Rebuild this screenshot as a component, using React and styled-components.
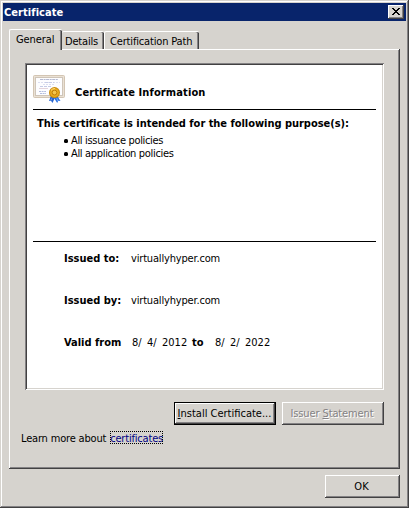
import React from 'react';
import styled, { createGlobalStyle } from 'styled-components';

const face = '#d6d3ce';
const light = '#ffffff';
const shade = '#848284';
const dark = '#424142';

const GlobalStyle = createGlobalStyle`
  *, *::before, *::after { box-sizing: border-box; }
  body {
    margin: 0;
    background: #fff;
    color: #000;
    font: 11px/13px "DejaVu Sans Condensed", "DejaVu Sans", Tahoma, sans-serif;
    white-space: nowrap;
  }
`;

const Window = styled.div`
  width: 409px;
  height: 508px;
  padding: 3px;
  display: flex;
  flex-direction: column;
  background: ${face};
  box-shadow: inset -1px -1px ${dark}, inset 1px 1px ${face},
    inset -2px -2px ${shade}, inset 2px 2px ${light};
`;

const TitleBar = styled.header`
  height: 18px;
  flex: none;
  padding: 0 2px 0 1px;
  display: flex;
  align-items: center;
  justify-content: space-between;
  background: #08246b;
  color: #fff;
  font-weight: bold;
`;

const Text = styled.span`
  letter-spacing: ${(p) => p.$track || 0}px;
`;

const CloseButton = styled.button`
  width: 16px;
  height: 14px;
  padding: 0 1px 1px 0;
  border: 0;
  display: flex;
  align-items: center;
  justify-content: center;
  background: ${face};
  box-shadow: inset -1px -1px ${dark}, inset 1px 1px ${light},
    inset -2px -2px ${shade};
`;

const Body = styled.main`
  flex: 1;
  display: flex;
  flex-direction: column;
  padding: 8px 6px 0;
`;

const TabStrip = styled.nav`
  height: 20px;
  display: flex;
  align-items: flex-end;
`;

const Tab = styled.div`
  width: ${(p) => p.$width}px;
  height: ${(p) => (p.$active ? 21 : 18)}px;
  margin-bottom: ${(p) => (p.$active ? -1 : 0)}px;
  padding: 3px 0 0 ${(p) => p.$inset}px;
  border: solid ${light};
  border-width: 1px 0 0 ${(p) => (p.$joined ? 0 : 1)}px;
  border-radius: 2px 2px 0 0;
  background: ${face};
  box-shadow: inset -1px 0 ${dark}, inset -2px 0 ${shade};
  z-index: ${(p) => (p.$active ? 1 : 0)};
`;

const Panel = styled.section`
  height: 420px;
  padding: 14px 16px 0;
  box-shadow: inset -1px -1px ${dark}, inset 1px 1px ${light},
    inset -2px -2px ${shade};
`;

const Sheet = styled.article`
  width: 359px;
  height: 327px;
  padding: 12px 8px 2px;
  background: #fff;
  box-shadow: inset 1px 1px ${shade}, inset -1px -1px ${light},
    inset 2px 2px ${dark}, inset -2px -2px ${face};
`;

const SheetHeader = styled.div`
  height: 34px;
  display: flex;
  gap: 9px;
  font-weight: bold;
`;

const SheetTitle = styled.h1`
  margin: 11px 0 0;
  font: inherit;
  letter-spacing: 0.12px;
`;

const Rule = styled.hr`
  width: 343px;
  height: 1px;
  margin: 0;
  border: 0;
  background: #000;
`;

const Purposes = styled.div`
  height: 131px;
  padding: 7px 0 0 4px;
`;

const PurposeTitle = styled.h2`
  margin: 0 0 4px;
  font: inherit;
  font-weight: bold;
  letter-spacing: -0.03px;
`;

const PurposeList = styled.ul`
  margin: 0;
  padding: 0 0 0 27px;
  list-style: none;
`;

const Purpose = styled.li`
  display: flex;
  align-items: center;
  gap: 3px;
  letter-spacing: -0.33px;

  &::before {
    content: '';
    width: 4px;
    height: 4px;
    margin-top: 1px;
    border-radius: 1.5px;
    background: #000;
  }
`;

const Details = styled.dl`
  margin: 10px 0 0 31px;
  display: flex;
  flex-direction: column;
  gap: 29px;
`;

const Field = styled.div`
  display: flex;
`;

const FieldName = styled.dt`
  width: 67px;
  font-weight: bold;
`;

const FieldValue = styled.dd`
  margin: 0;
  display: flex;
  letter-spacing: ${(p) => p.$track || 0}px;
`;

const DateParts = styled.span`
  display: grid;
  grid-template-columns: 15px 15px 30px;
  padding-left: 1px;
`;

const DateTo = styled.b`
  width: 22px;
`;

const Actions = styled.div`
  display: flex;
  justify-content: flex-end;
  gap: 6px;
  margin-top: 12px;
`;

const Button = styled.button`
  width: ${(p) => p.$width || 102}px;
  height: 23px;
  padding: 0 ${(p) => (p.$default ? 1 : 2)}px 1px 0;
  border: 0;
  background: ${face};
  color: ${(p) => (p.disabled ? shade : '#000')};
  font: inherit;
  letter-spacing: ${(p) => p.$track || 0}px;
  text-shadow: ${(p) => (p.disabled ? `1px 1px ${light}` : 'none')};
  box-shadow: ${(p) =>
    p.$default
      ? `inset 0 0 0 1px #000, inset -2px -2px ${dark}, inset 2px 2px ${light}, inset -3px -3px ${shade}`
      : `inset -1px -1px ${dark}, inset 1px 1px ${light}, inset -2px -2px ${shade}`};
`;

const Key = styled.u`
  text-decoration-thickness: 1px;
  text-underline-offset: 1px;
`;

const LearnMore = styled.p`
  margin: 6px 0 0 -4px;
  display: flex;
  align-items: flex-start;
  gap: 4px;
  line-height: 15px;
  letter-spacing: -0.18px;
`;

const Link = styled.a`
  width: 53px;
  height: 13px;
  outline: 1px dotted #000;
  outline-offset: -1px;
  color: #000084;
  letter-spacing: -0.19px;
`;

const Footer = styled.footer`
  display: flex;
  justify-content: flex-end;
  padding-top: 6px;
`;

const CloseGlyph = () => (
  <svg width="8" height="7" viewBox="0 0 8 7" shapeRendering="crispEdges">
    <path
      d="M0 0h2v1h-2zM6 0h2v1h-2zM1 1h2v1h-2zM5 1h2v1h-2zM2 2h4v1h-4zM3 3h2v1h-2zM2 4h4v1h-4zM1 5h2v1h-2zM5 5h2v1h-2zM0 6h2v1h-2zM6 6h2v1h-2z"
      fill="#000"
    />
  </svg>
);

const CertificateIcon = () => (
  <svg width="33" height="29" viewBox="0 0 33 29">
    <rect x="0.5" y="0.5" width="31" height="22" rx="1" fill="#e4dacb" stroke="#d3c5b3" />
    <rect x="1.5" y="1.5" width="29" height="20" fill="none" stroke="#f1e9dc" strokeDasharray="1 1" />
    <rect x="2.5" y="2.5" width="27" height="18" fill="#fdfdff" stroke="#cfc5b9" />
    <path d="M7 4.5h18" stroke="#b4b9d0" strokeDasharray="3 .6 2 .5" />
    <path d="M5 7.5h22M10 9.5h12" stroke="#dcdff0" strokeDasharray="2 1" />
    <path d="M12 7.5h9M7 11.5h12" stroke="#c5cbe6" strokeDasharray="3 1" />
    <path d="M6 13.5h9" stroke="#e2d3dc" />
    <path d="M6 16.5h7M7 18.5h6" stroke="#b3bddd" strokeDasharray="2 .6" />
    <path d="M18 20.5l-2 5.5 2-.3 1.5 2.3L21.8 23z" fill="#2864cf" />
    <path d="M24 20.5l3.5 5.5-2.3-.2-1 2.2-3.2-5z" fill="#2e72e2" />
    <path d="M18.7 23.5l-.8 2M23.8 23l1 3" stroke="#72a9f5" />
    <circle cx="21.5" cy="17.6" r="5.5" fill="#c98a0c" />
    <circle cx="21.5" cy="17.6" r="4.4" fill="#e9ab20" />
    <circle cx="21.5" cy="17.6" r="2.4" fill="#f4c64c" stroke="#b97608" strokeWidth=".9" />
    <path d="M18 15.4q1.5-2 4-1.8" fill="none" stroke="#ffe080" />
  </svg>
);

const ValidDate = ({ month, day, year }) => (
  <DateParts>
    <span>{month}/</span>
    <span>{day}/</span>
    <span>{year}</span>
  </DateParts>
);

export default function App() {
  return (
    <>
      <GlobalStyle />
      <Window>
        <TitleBar>
          <Text $track={0.06}>Certificate</Text>
          <CloseButton aria-label="Close">
            <CloseGlyph />
          </CloseButton>
        </TitleBar>
        <Body>
          <TabStrip>
            <Tab $active $width={53} $inset={6}>
              <Text $track={-0.1}>General</Text>
            </Tab>
            <Tab $joined $width={42} $inset={3}>
              <Text $track={-0.19}>Details</Text>
            </Tab>
            <Tab $width={95} $inset={5}>
              <Text $track={-0.16}>Certification Path</Text>
            </Tab>
          </TabStrip>
          <Panel>
            <Sheet>
              <SheetHeader>
                <CertificateIcon />
                <SheetTitle>Certificate Information</SheetTitle>
              </SheetHeader>
              <Rule />
              <Purposes>
                <PurposeTitle>This certificate is intended for the following purpose(s):</PurposeTitle>
                <PurposeList>
                  <Purpose>All issuance policies</Purpose>
                  <Purpose>All application policies</Purpose>
                </PurposeList>
              </Purposes>
              <Rule />
              <Details>
                <Field>
                  <FieldName>Issued to:</FieldName>
                  <FieldValue $track={-0.17}>virtuallyhyper.com</FieldValue>
                </Field>
                <Field>
                  <FieldName>Issued by:</FieldName>
                  <FieldValue $track={-0.17}>virtuallyhyper.com</FieldValue>
                </Field>
                <Field>
                  <FieldName>Valid from</FieldName>
                  <FieldValue>
                    <ValidDate month="8" day="4" year="2012" />
                    <DateTo>to</DateTo>
                    <ValidDate month="8" day="2" year="2022" />
                  </FieldValue>
                </Field>
              </Details>
            </Sheet>
            <Actions>
              <Button $default>
                <Key>I</Key>nstall Certificate...
              </Button>
              <Button disabled $track={-0.12}>
                Issuer <Key>S</Key>tatement
              </Button>
            </Actions>
            <LearnMore>
              <span>Learn more about</span>
              <Link>certificates</Link>
            </LearnMore>
          </Panel>
          <Footer>
            <Button $width={75}>OK</Button>
          </Footer>
        </Body>
      </Window>
    </>
  );
}
